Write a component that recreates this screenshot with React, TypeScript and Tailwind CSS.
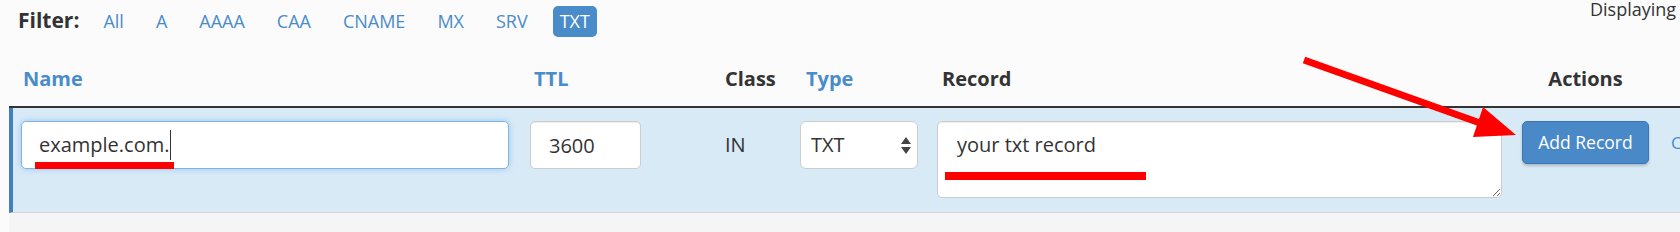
const filters = ['All', 'A', 'AAAA', 'CAA', 'CNAME', 'MX', 'SRV', 'TXT'];

export default function App() {
  return (
    <main className="relative h-[232px] w-[1680px] overflow-hidden bg-[#fbfbfb] font-['Open_Sans',sans-serif] text-[#333]">
      {/* filter bar */}
      <div className="flex h-[42px]">
        <div className="flex flex-1 items-center pl-[18px]">
          <span className="text-[21px] font-bold">Filter:</span>
          <div className="ml-[17px] flex items-center gap-[18px]">
            {filters.map((f) => (
              <button
                key={f}
                className={
                  f === 'TXT'
                    ? 'h-[31px] rounded-[5px] bg-[#4a8cca] px-[7px] text-[18px] text-white'
                    : 'h-[31px] px-[7px] text-[18px] text-[#4a8cca]'
                }
              >
                {f}
              </button>
            ))}
          </div>
        </div>
        <div className="w-[90px] shrink-0 whitespace-nowrap text-[18px] leading-[19px]">
          Displaying 1 to 1 out of 1 records
        </div>
      </div>

      {/* table head */}
      <div className="ml-[9px] grid h-[66px] grid-cols-[509px_195px_75px_137px_585px_200px] items-end border-b-2 border-[#333] pb-[13px] pl-[12px] text-[20px] font-bold leading-[28px]">
        <div className="pl-[2px] text-[#4a8cca]">Name</div>
        <div className="pl-[4px] text-[#4a8cca]">TTL</div>
        <div>Class</div>
        <div className="pl-[6px] text-[#4a8cca]">Type</div>
        <div className="pl-[5px]">Record</div>
        <div className="w-[127px] text-center">Actions</div>
      </div>

      {/* edit row */}
      <div className="ml-[9px] grid h-[105px] grid-cols-[509px_195px_75px_137px_585px_200px] items-start border-b border-l-4 border-b-[#d4d4d4] border-l-[#3e80c0] bg-[#d9eaf7] pl-2 pt-[13px] text-[20px]">
        <div className="flex h-[48px] w-[488px] items-center rounded-[5px] border border-[#7fb3e3] bg-white pl-[17px] shadow-[0_0_6px_rgba(102,175,233,0.55)]">
          <span>example.com.</span>
          <span className="ml-[1px] inline-block h-[30px] w-px bg-[#333]" />
        </div>
        <input
          readOnly
          value="3600"
          className="h-[48px] w-[111px] rounded-[5px] border border-[#ccc] bg-white px-[18px] text-[20px] shadow-[inset_0_1px_1px_rgba(0,0,0,0.075)] outline-none"
        />
        <div className="flex h-[48px] items-center">IN</div>
        <div className="flex h-[48px] w-[118px] items-center justify-between rounded-[6px] border border-[#ccc] bg-white pl-[10px] pr-[6px]">
          <span>TXT</span>
          <svg width="10" height="17" viewBox="0 0 10 17">
            <path d="M5 0 L10 7 L0 7 Z" fill="#444" />
            <path d="M0 10 L10 10 L5 17 Z" fill="#444" />
          </svg>
        </div>
        <textarea
          readOnly
          defaultValue="your txt record"
          className="h-[77px] w-[565px] rounded-[5px] border border-[#ccc] bg-white pl-[19px] pt-[9px] text-[20px] leading-[28px] shadow-[inset_0_1px_1px_rgba(0,0,0,0.075)] outline-none"
        />
        <div className="flex items-center gap-[22px] whitespace-nowrap">
          <button className="h-[43px] w-[127px] shrink-0 rounded-[5px] border border-[#3a76b3] bg-[#4a89c8] text-[17.5px] text-white shadow-[0_2px_3px_rgba(0,0,0,0.2)]">
            Add Record
          </button>
          <span className="text-[17px] text-[#4a8cca]">Cancel</span>
        </div>
      </div>
      <div className="ml-[9px] h-[20px] bg-[#f5f5f5]" />

      {/* red annotations */}
      <div className="absolute left-[35px] top-[162px] h-[7px] w-[139px] bg-[#ff0000]" />
      <div className="absolute left-[945px] top-[172px] h-[8px] w-[201px] bg-[#ff0000]" />
      <svg className="pointer-events-none absolute left-0 top-0" width="1680" height="232" viewBox="0 0 1680 232">
        <line x1="1304" y1="60" x2="1480" y2="123" stroke="#ff0000" strokeWidth="7" />
        <polygon points="1516,135 1483,107 1473,137" fill="#ff0000" />
      </svg>
    </main>
  );
}
